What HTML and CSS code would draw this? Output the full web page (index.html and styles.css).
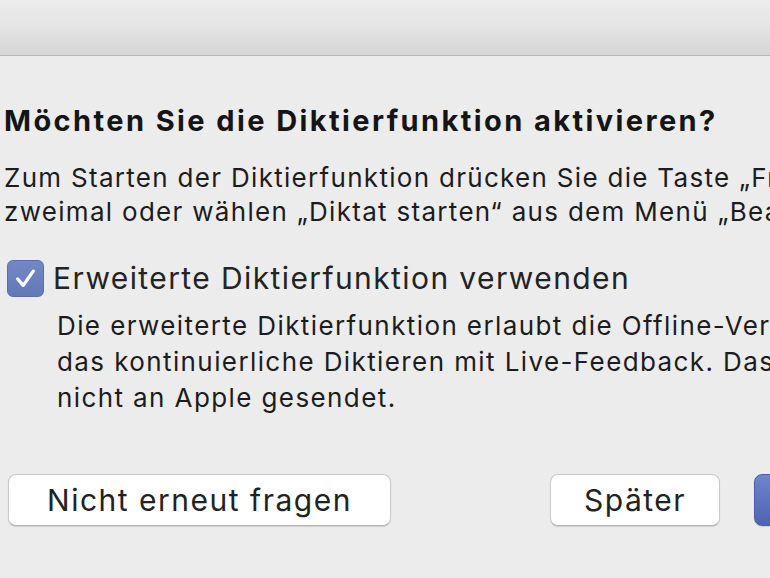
FILE: index.html
```html
<!DOCTYPE html>
<html lang="de">
<head>
<meta charset="utf-8">
<title>Diktierfunktion</title>
<link rel="stylesheet" href="styles.css">
</head>
<body>
<div class="window">
  <div class="titlebar"></div>
  <main class="content">
    <h1 class="title">Möchten Sie die Diktierfunktion aktivieren?</h1>
    <p class="intro">Zum Starten der Diktierfunktion drücken Sie die Taste „Fn“<br>zweimal oder wählen „Diktat starten“ aus dem Menü „Bearbeiten“.</p>
    <label class="option">
      <span class="check">
        <svg viewBox="0 0 36 36" width="36" height="36"><path d="M9.5 18.5 L15.5 25.5 L26.5 10" fill="none" stroke="#fff" stroke-width="3.6" stroke-linecap="round" stroke-linejoin="round"/></svg>
      </span>
      <span class="option-label">Erweiterte Diktierfunktion verwenden</span>
    </label>
    <p class="desc">Die erweiterte Diktierfunktion erlaubt die Offline-Verwendung und<br>das kontinuierliche Diktieren mit Live-Feedback. Das Gesprochene wird<br>nicht an Apple gesendet.</p>
    <div class="actions">
      <button class="btn btn-wide">Nicht erneut fragen</button>
      <button class="btn btn-later">Später</button>
      <button class="btn btn-primary">Aktivieren</button>
    </div>
  </main>
</div>
</body>
</html>
```
FILE: styles.css
```css
html, body {
  margin: 0;
  padding: 0;
  background: #ececec;
  overflow: hidden;
}
body {
  width: 770px;
  height: 578px;
  font-family: "Inter", "Liberation Sans", sans-serif;
  color: #1e1e1e;
}
.window {
  width: 1300px;
}
.titlebar {
  height: 55px;
  background: linear-gradient(to bottom, #ececec 0%, #e4e4e4 50%, #d5d5d5 100%);
  border-bottom: 1px solid #b7b7b7;
}
.content {
  padding: 48px 0 0 4px;
  white-space: nowrap;
}
.title {
  margin: 0;
  font-size: 29px;
  line-height: 34px;
  font-weight: 700;
  letter-spacing: 2.4px;
  color: #151515;
}
.intro {
  margin: 23px 0 0 0;
  font-size: 26px;
  line-height: 34px;
  letter-spacing: 1.3px;
  color: #1c1c1c;
}
.option {
  display: flex;
  align-items: center;
  gap: 9px;
  margin: 31px 0 0 3px;
  height: 36px;
}
.check {
  width: 35px;
  height: 35px;
  border-radius: 6px;
  background: linear-gradient(to bottom, #7387c4, #6479b8);
  border: 1px solid #5a6eab;
  display: flex;
  align-items: center;
  justify-content: center;
}
.check svg {
  width: 33px;
  height: 33px;
}
.option-label {
  font-size: 30px;
  line-height: 36px;
  letter-spacing: 1.4px;
  color: #232323;
}
.desc {
  margin: 12px 0 0 53px;
  font-size: 26px;
  line-height: 36px;
  letter-spacing: 1.4px;
  color: #1c1c1c;
}
.actions {
  display: flex;
  align-items: center;
  margin: 58px 0 0 4px;
}
.btn {
  font-family: "Inter", "Liberation Sans", sans-serif;
  height: 52px;
  border-radius: 8px;
  background: #fff;
  border: 1px solid #c9c9c9;
  border-bottom-color: #b3b3b3;
  box-shadow: 0 1px 1px rgba(0, 0, 0, 0.12);
  font-size: 30px;
  letter-spacing: 1.5px;
  color: #222;
  padding: 0;
}
.btn-wide {
  width: 383px;
}
.btn-later {
  width: 170px;
  margin-left: 159px;
}
.btn-primary {
  width: 200px;
  margin-left: 34px;
  background: linear-gradient(to bottom, #6e86cc, #4d64b0);
  border-color: #4a60a8;
  color: #fff;
}
```
